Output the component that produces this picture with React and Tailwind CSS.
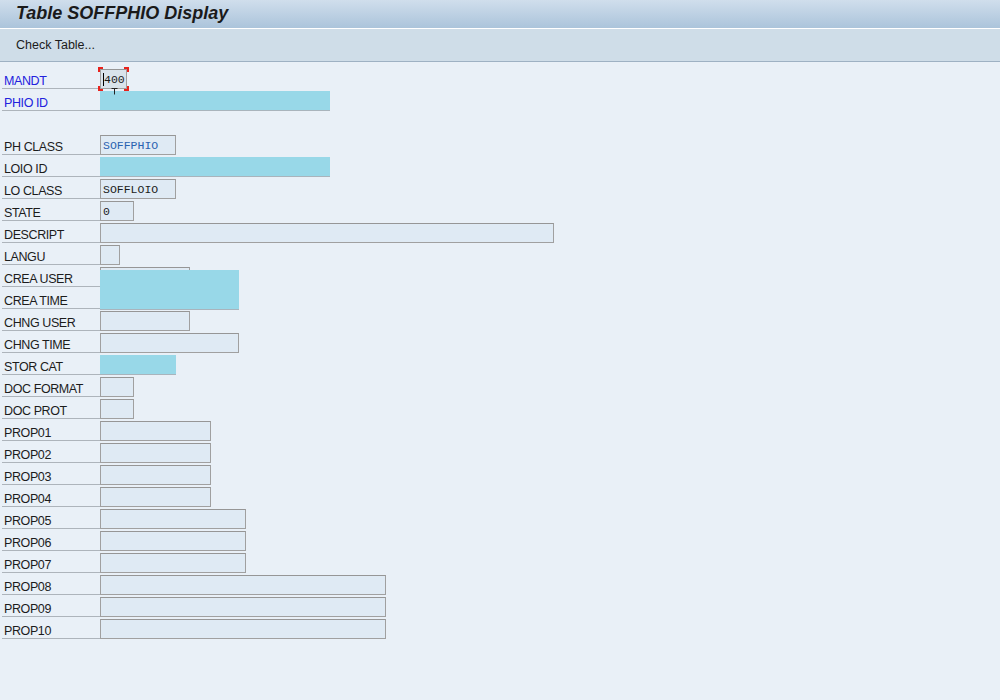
const rows = [
  { label: 'MANDT', key: true, width: 27, value: '400', focus: true },
  { label: 'PHIO ID', key: true, width: 230, masked: true },
  { blank: true },
  { label: 'PH CLASS', width: 76, value: 'SOFFPHIO', blue: true },
  { label: 'LOIO ID', width: 230, masked: true },
  { label: 'LO CLASS', width: 76, value: 'SOFFLOIO' },
  { label: 'STATE', width: 34, value: '0' },
  { label: 'DESCRIPT', width: 454 },
  { label: 'LANGU', width: 20 },
  { label: 'CREA USER', width: 90, overlay: true },
  { label: 'CREA TIME', width: 139 },
  { label: 'CHNG USER', width: 90 },
  { label: 'CHNG TIME', width: 139 },
  { label: 'STOR CAT', width: 76, masked: true },
  { label: 'DOC FORMAT', width: 34 },
  { label: 'DOC PROT', width: 34 },
  { label: 'PROP01', width: 111 },
  { label: 'PROP02', width: 111 },
  { label: 'PROP03', width: 111 },
  { label: 'PROP04', width: 111 },
  { label: 'PROP05', width: 146 },
  { label: 'PROP06', width: 146 },
  { label: 'PROP07', width: 146 },
  { label: 'PROP08', width: 286 },
  { label: 'PROP09', width: 286 },
  { label: 'PROP10', width: 286 },
];

function Field({ row }) {
  if (row.masked) {
    return (
      <div
        className="h-[20px] bg-[#98d8e8] border-b border-[#a9b4bc]"
        style={{ width: row.width }}
      />
    );
  }
  return (
    <div
      className={`relative h-[20px] border border-[#a0a0a0] border-t-[#969696] flex items-center pt-[2px] pl-[2px] text-[11.5px] ${
        row.focus ? 'bg-[#d9e3eb]' : 'bg-[#dfeaf4]'
      } ${row.blue ? 'text-[#2a62b0]' : 'text-[#1c1c1c]'}`}
      style={{ width: row.width, fontFamily: '"Liberation Mono", monospace' }}
    >
      {row.focus && <span className="absolute left-[2px] top-[3px] w-px h-[13px] bg-black" />}
      <span className={row.focus ? 'pl-[1px]' : ''}>{row.value}</span>
      {row.focus && (
        <>
          <span className="absolute -left-[3px] -top-[3px] w-[5px] h-[5px] border-l-2 border-t-2 border-[#e8221c]" />
          <span className="absolute -right-[3px] -top-[3px] w-[5px] h-[5px] border-r-2 border-t-2 border-[#e8221c]" />
          <span className="absolute -left-[3px] -bottom-[3px] w-[5px] h-[5px] border-l-2 border-b-2 border-[#e8221c]" />
          <span className="absolute -right-[3px] -bottom-[3px] w-[5px] h-[5px] border-r-2 border-b-2 border-[#e8221c]" />
          <svg className="absolute left-[10px] top-[18px] z-20" width="7" height="7" viewBox="0 0 7 7">
            <path d="M0.5 0.5h6M3.5 0.5v6" stroke="#222" strokeWidth="1" fill="none" />
          </svg>
        </>
      )}
    </div>
  );
}

export default function App() {
  return (
    <div
      className="w-[1000px] h-[700px] bg-[#e9f0f7] overflow-hidden"
      style={{ fontFamily: '"Liberation Sans", Arial, sans-serif' }}
    >
      {/* title */}
      <div className="h-[28px] bg-gradient-to-b from-[#d0deec] to-[#abc4db] flex items-center pl-[16px]">
        <h1 className="text-[18px] leading-[22px] font-bold italic text-[#1a1a1a] -mt-[3px]">
          Table SOFFPHIO Display
        </h1>
      </div>
      <div className="h-px bg-white" />
      {/* toolbar */}
      <div className="h-[33px] bg-[#cfdde8] border-b border-[#9eb1c3] flex items-center pl-[16px]">
        <span className="text-[12.5px] text-[#1c1c1c]">Check Table...</span>
      </div>

      {/* form */}
      <div className="pt-[5px]">
        {rows.map((row, i) =>
          row.blank ? (
            <div key={i} className="h-[22px]" />
          ) : (
            <div key={i} className="relative h-[22px] flex items-end">
              <div
                className={`ml-[2px] w-[98px] h-[22px] border-b border-[#adb4bb] flex items-end pl-[2px] text-[12.5px] leading-[14px] tracking-[-0.4px] ${
                  row.key ? 'text-[#2222dd]' : 'text-[#1c1c1c]'
                }`}
              >
                {row.label}
              </div>
              <Field row={row} />
              {row.overlay && (
                <div className="absolute z-10 left-[100px] top-[5px] w-[139px] h-[40px] bg-[#98d8e8] border-b border-[#a9b4bc]" />
              )}
            </div>
          )
        )}
      </div>
    </div>
  );
}
